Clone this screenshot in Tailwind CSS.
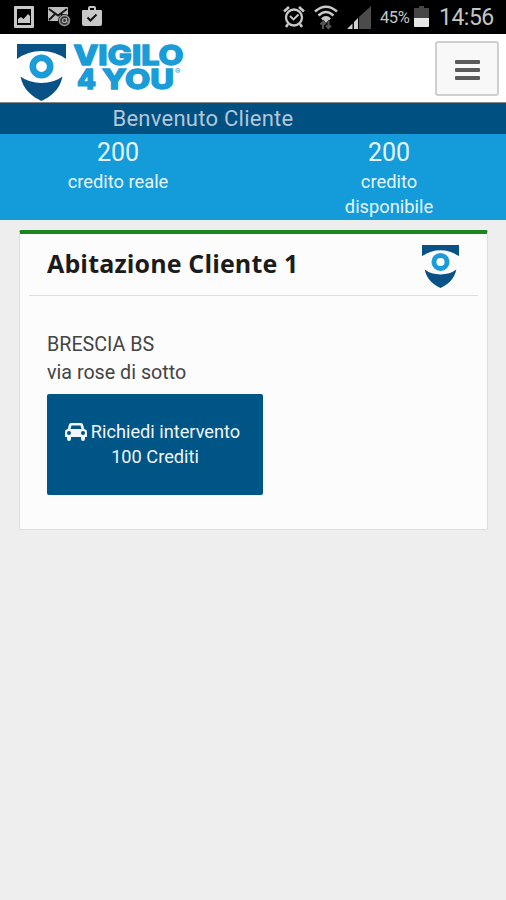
<!DOCTYPE html>
<html lang="it">
<head>
<meta charset="utf-8">
<title>Vigilo4You</title>
<script src="https://cdn.jsdelivr.net/npm/@tailwindcss/browser@4"></script>
</head>
<body class="bg-[#eeeeee] font-['Roboto',sans-serif] w-[506px] h-[900px] overflow-hidden">
<div class="h-[34px] bg-black flex items-center justify-between pl-[14px] pr-[11px] text-[#c4c4c4]">
  <div class="flex items-center">
    <svg class="w-5 h-[22px] -mt-px" viewBox="0 0 20 22"><path fill="#c8c8c8" fill-rule="evenodd" d="M1 0H19Q20 0 20 1V21Q20 22 19 22H1Q0 22 0 21V1Q0 0 1 0ZM3 3V19H17V3Z"/><path fill="#c8c8c8" d="M4 17V13L7 11L9.500 13L14 8L16 10V17Z"/></svg>
    <svg class="ml-[14px] w-[23px] h-5 -mt-px" viewBox="0 0 23 20"><rect width="20" height="14" rx="1" fill="#bdbdbd"/><path d="M1 2L10 8.500L19 2M1 13L7 7M13 7L16 10" stroke="#151515" stroke-width="2" fill="none"/><circle cx="16.500" cy="13.500" r="6.500" fill="#111"/><circle cx="16.500" cy="13.500" r="5" stroke="#999" stroke-width="1.400" fill="#333"/><circle cx="16.500" cy="13.500" r="2" stroke="#aaa" stroke-width="1.200" fill="none"/><path d="M18.500 11V15L21 15" stroke="#aaa" fill="none"/></svg>
    <svg class="ml-[11px] w-5 h-5 -mt-[2px]" viewBox="0 0 20 20"><path fill="#c8c8c8" fill-rule="evenodd" d="M6 4V2Q6 0 8 0H12Q14 0 14 2V4H19Q20 4 20 5V18Q20 20 18 20H2Q0 20 0 18V5Q0 4 1 4ZM8 4H12V2H8Z"/><path d="M5.500 11.500L8.500 14.500L14.500 8.500" stroke="#111" stroke-width="2" fill="none"/></svg>
  </div>
  <div class="flex items-center">
    <svg class="w-[22px] h-[22px] -mt-px" viewBox="0 0 22 22" fill="none" stroke="#c8c8c8"><circle cx="11" cy="11.500" r="8" stroke-width="2.300"/><path stroke-width="2.600" d="M1 5.500L6 1M21 5.500L16 1M5 18L3 21M17 18L19 21"/><path stroke-width="1.800" d="M7 10L10.500 13.500L15.500 8.500"/></svg>
    <svg class="ml-[9px] w-6 h-[25px]" viewBox="0 0 24 25" fill="none" stroke="#c8c8c8" stroke-width="2.600"><path d="M1 6.500Q12-3 23 6.500M4.500 10.500Q12 3.500 19.500 10.500M8 14.500Q12 10.500 16 14.500"/><path d="M9.500 15L12 13L14.500 15L12 18Z" fill="#c8c8c8" stroke="none"/><path stroke="#555" stroke-width="2" d="M9 24V17M6.500 19.500L9 17L11.500 19.500M14.500 16V23M12 20.500L14.500 23L17 20.500"/></svg>
    <svg class="ml-[9px] w-6 h-[23px]" viewBox="0 0 24 23"><path fill="#4b4b4b" d="M24 0V23H12V11Z"/><path fill="#d0d0d0" d="M11 12V23H7V16ZM5.500 17.500V23H0Z"/></svg>
    <span class="ml-[9px] w-[31px] text-[16.500px] leading-none whitespace-nowrap tracking-[-0.4px] mt-[2px]">45%</span>
    <svg class="ml-[3px] mr-px w-[15px] h-[21px] -mt-px" viewBox="0 0 15 21"><path fill="#454545" d="M5 0H10V2H15V12H0V2H5Z"/><path fill="#e8e8e8" d="M0 12H15V20Q15 21 14 21H1Q0 21 0 20Z"/></svg>
    <span class="ml-[9px] w-[56px] text-[23px] leading-none whitespace-nowrap tracking-[-0.5px]">14:56</span>
  </div>
</div>
<header class="h-[69px] bg-white border-b border-[#888] flex items-start justify-between pl-[17px] pr-[7px]">
  <div class="flex pt-[10px]">
    <svg class="w-[49px] h-[57px]" viewBox="0 0 49 57"><path fill="#0a5286" d="M0 0H49V15Q38 7 24.500 7Q11 7 0 15ZM3.500 32.500Q12 39 24.500 39Q37 39 45.500 32.500C43 46 33 53 24.500 57C16 53 6 46 3.500 32.500Z"/><circle cx="24.500" cy="22.500" r="8.700" fill="white" stroke="#199cd8" stroke-width="6.600"/></svg>
    <svg class="ml-[6px] -mt-[10px] w-[116px] h-[66px]" viewBox="-1 -10 116 66" fill="#199cd8" stroke="#199cd8" stroke-width="1.300" font-family="Inter, sans-serif" font-weight="800"><text x="0.500" y="20.500" font-size="27.500" textLength="110" lengthAdjust="spacingAndGlyphs">VIGILO</text><text x="4" y="44.500" font-size="27.500" textLength="19" lengthAdjust="spacingAndGlyphs">4</text><text x="29" y="44.500" font-size="27.500" textLength="72" lengthAdjust="spacingAndGlyphs">YOU</text><text x="102" y="30" font-size="8" font-weight="600" stroke="none">®</text></svg>
  </div>
  <button class="mt-[7px] w-[64px] h-[55px] rounded-[3px] border-2 border-[#cfcfcf] bg-[#f8f8f8] flex flex-col items-center justify-center gap-[4px] pt-[3px]">
    <span class="w-[25px] h-[4px] bg-[#5a5a5a] rounded-[1px]"></span>
    <span class="w-[25px] h-[4px] bg-[#5a5a5a] rounded-[1px]"></span>
    <span class="w-[25px] h-[4px] bg-[#5a5a5a] rounded-[1px]"></span>
  </button>
</header>
<div class="h-[31px] bg-[#005082] pl-[112.500px] text-[#b3c7d8] text-[22px] leading-[31px] tracking-[0.25px]">Benvenuto Cliente</div>
<section class="h-[86px] bg-[#149bd9] text-[#e6f5fd] flex justify-between pl-[58px] pr-[57px] text-center text-[18.300px] leading-[25px]">
  <div class="w-[120px] pt-[4px]"><div class="text-[25px] leading-[30px]">200</div><div class="pt-[1px]">credito reale</div></div>
  <div class="w-[120px] pt-[4px]"><div class="text-[25px] leading-[30px]">200</div><div class="pt-[1px]">credito<br>disponibile</div></div>
</section>
<main class="mt-[10px] ml-[19px] w-[469px] h-[300px] bg-[#fcfcfc] border border-t-4 border-[#dedede] border-t-[#1c8420] rounded-[2px]">
  <div class="mx-[9px] h-[62px] border-b border-[#dddddd] flex items-start justify-between pl-[18px] pr-[19px]">
    <h1 class="pt-[11px] font-['Open_Sans',sans-serif] font-bold text-[25px] leading-[36px] tracking-[0.15px] text-[#1b1b1b] whitespace-nowrap">Abitazione Cliente 1</h1>
    <svg class="mt-[11px] w-[37px] h-[43px]" viewBox="0 0 49 57"><path fill="#0a5286" d="M0 0H49V15Q38 7 24.500 7Q11 7 0 15ZM3.500 32.500Q12 39 24.500 39Q37 39 45.500 32.500C43 46 33 53 24.500 57C16 53 6 46 3.500 32.500Z"/><circle cx="24.500" cy="22.500" r="8.700" fill="white" stroke="#199cd8" stroke-width="6.600"/></svg>
  </div>
  <div class="pl-[27px] pt-[35px] text-[19.700px] leading-[28px] text-[#444]">
    <div>BRESCIA BS</div>
    <div>via rose di sotto</div>
    <button class="mt-[7px] w-[216px] h-[101px] block bg-[#005587] rounded-[2px] text-[#f0f6fa] text-[18.200px] leading-[25px] pb-[1px]">
      <span class="flex items-center justify-center gap-[4px] pr-[5px] whitespace-nowrap"><svg class="w-[22px] h-[18px] shrink-0" viewBox="0 0 22 18"><path fill="currentColor" fill-rule="evenodd" d="M6 0H16Q17.700 0 18.200 2L19.200 6Q22 6.500 22 9V14H20V16Q20 18 18 18Q16 18 16 16V14H6V16Q6 18 4 18Q2 18 2 16V14H0V9Q0 6.500 2.800 6L3.800 2Q4.300 0 6 0ZM5.500 6H16.500L15.500 2.500H6.500ZM4 8A2 2 0 1 0 4 12A2 2 0 1 0 4 8ZM18 8A2 2 0 1 0 18 12A2 2 0 1 0 18 8Z"/></svg><span>Richiedi intervento</span></span>
      <span class="block">100 Crediti</span>
    </button>
  </div>
</main>
</body>
</html>
